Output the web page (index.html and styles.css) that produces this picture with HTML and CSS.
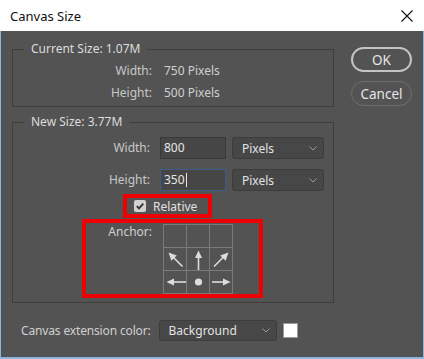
FILE: index.html
```html
<!DOCTYPE html>
<html>
<head>
<meta charset="utf-8">
<link rel="stylesheet" href="styles.css">
</head>
<body>
<div class="window">
  <div class="titlebar">
    <span class="title">Canvas Size</span>
    <svg class="close" width="12" height="12" viewBox="0 0 12 12"><path d="M0.5 0.5L11.5 11.5M11.5 0.5L0.5 11.5" stroke="#111" stroke-width="1.1" fill="none"/></svg>
  </div>
  <div class="body">
    <div class="main">
      <div class="groups">
        <fieldset class="group g1">
          <legend>Current Size: 1.07M</legend>
          <div class="info">
            <span class="lbl">Width:</span><span class="val">750 Pixels</span>
            <span class="lbl">Height:</span><span class="val">500 Pixels</span>
          </div>
        </fieldset>
        <fieldset class="group g2">
          <legend>New Size: 3.77M</legend>
          <div class="fields">
            <span class="lbl">Width:</span>
            <div class="input">800</div>
            <div class="select">Pixels<svg class="chev" width="8" height="5" viewBox="0 0 8 5"><path d="M0.5 0.5L4 4L7.5 0.5" stroke="#9a9a9a" fill="none"/></svg></div>
            <span class="lbl">Height:</span>
            <div class="input focus">350<span class="caret"></span></div>
            <div class="select">Pixels<svg class="chev" width="8" height="5" viewBox="0 0 8 5"><path d="M0.5 0.5L4 4L7.5 0.5" stroke="#9a9a9a" fill="none"/></svg></div>
          </div>
          <div class="relative mark">
            <span class="check"><svg width="12" height="12" viewBox="0 0 12 12"><path d="M2.8 6.2L5 8.4L9.3 3.6" stroke="#333" stroke-width="1.9" fill="none"/></svg></span>
            <span class="rel-text">Relative</span>
          </div>
          <div class="anchor mark">
            <span class="anchor-lbl">Anchor:</span>
            <div class="grid">
              <div class="cell"></div>
              <div class="cell"></div>
              <div class="cell"></div>
              <div class="cell"><svg viewBox="0 0 22 22" width="22" height="22"><path d="M9 9L18.5 18.5" class="ln"/><polygon points="4.5,4.5 12.8,7.4 7.4,12.8" class="hd"/></svg></div>
              <div class="cell"><svg viewBox="0 0 22 22" width="22" height="22"><path d="M11.5 9V22" class="ln"/><polygon points="11.5,2.5 15,10 8,10" class="hd"/></svg></div>
              <div class="cell"><svg viewBox="0 0 22 22" width="22" height="22"><path d="M13.5 9L4 18.5" class="ln"/><polygon points="18.5,4.5 15.6,12.8 10.2,7.4" class="hd"/></svg></div>
              <div class="cell"><svg viewBox="0 0 22 22" width="22" height="22"><path d="M9 11H22" class="ln"/><polygon points="2.5,11 10,7.5 10,14.5" class="hd"/></svg></div>
              <div class="cell"><svg viewBox="0 0 22 22" width="22" height="22"><circle cx="11.5" cy="11" r="3.6" class="hd"/></svg></div>
              <div class="cell"><svg viewBox="0 0 22 22" width="22" height="22"><path d="M2 11H14" class="ln"/><polygon points="20.5,11 13,7.5 13,14.5" class="hd"/></svg></div>
            </div>
          </div>
        </fieldset>
      </div>
      <div class="buttons">
        <button class="btn ok">OK</button>
        <button class="btn cancel">Cancel</button>
      </div>
    </div>
    <div class="ext">
      <span class="ext-lbl">Canvas extension color:</span>
      <div class="select wide">Background<svg class="chev" width="8" height="5" viewBox="0 0 8 5"><path d="M0.5 0.5L4 4L7.5 0.5" stroke="#9a9a9a" fill="none"/></svg></div>
      <span class="swatch"></span>
    </div>
  </div>
</div>
</body>
</html>
```
FILE: styles.css
```css
* { box-sizing: border-box; }
html, body { margin: 0; padding: 0; background: #535353; }
body { font-family: "Noto Sans", "Open Sans", sans-serif; font-size: 12px; color: #d6d6d6; }

.window {
  width: 424px;
  height: 359px;
  border: 1px solid #8cb6e0;
  border-top: none;
  border-bottom-width: 2px;
  background: #535353;
  display: flex;
  flex-direction: column;
}

.titlebar {
  height: 31px;
  background: #fff;
  margin: 0 -1px;
  display: flex;
  align-items: center;
  justify-content: space-between;
  padding: 0 11px 0 10px;
  flex: none;
}
.title { font-size: 13px; color: #111; }
.close { display: block; }

.body {
  flex: 1;
  padding: 9px 11px 0 11px;
  display: flex;
  flex-direction: column;
}

.main { display: flex; gap: 17px; }
.groups { width: 323px; display: flex; flex-direction: column; }

.group {
  margin: 0;
  padding: 0 0 3px 0;
  border: 1px solid #3e3e3e;
  min-width: 0;
}
.group legend {
  margin-left: 11px;
  padding: 0 7px;
  line-height: 18px;
  color: #dcdcdc;
}
.g2 { margin-top: 6px; padding-bottom: 4px; }

.info {
  display: grid;
  grid-template-columns: 139px auto;
  column-gap: 12px;
  grid-auto-rows: 22px;
  align-items: center;
  margin-top: 1px;
}
.lbl { text-align: right; color: #c8c8c8; }
.val { color: #d0d0d0; }

.fields {
  display: grid;
  grid-template-columns: 139px 68px 92px;
  column-gap: 6px;
  row-gap: 9px;
  margin-top: 5px;
  align-items: center;
}
.fields .lbl { margin-right: 2px; }
.input {
  height: 22px;
  background: #464646;
  border: 1px solid #3a3a3a;
  color: #e6e6e6;
  padding: 0 3px;
  line-height: 20px;
  margin-left: 2px;
  display: flex;
  align-items: center;
}
.input.focus { border-color: #3b5d88; }
.caret { display: inline-block; width: 1px; height: 14px; background: #e6e6e6; margin-left: 1px; }

.select {
  height: 22px;
  background: #474747;
  border: 1px solid #3c3c3c;
  border-radius: 3px;
  color: #e2e2e2;
  padding: 0 6px 0 9px;
  display: flex;
  align-items: center;
  justify-content: space-between;
}
.fields .select { margin-left: 0; margin-top: 1px; }
.chev { display: block; }

.mark { border: 4px solid #ee0000; }
.relative {
  margin: 3px 0 0 110px;
  width: 89px;
  height: 24px;
  display: flex;
  align-items: center;
  padding-left: 7px;
  gap: 7px;
}
.check {
  width: 12px;
  height: 12px;
  background: #d2d2d2;
  border-radius: 2px;
  display: block;
}
.check svg { display: block; }
.rel-text { color: #e0e0e0; }

.anchor {
  margin: 1px 0 0 69px;
  width: 181px;
  height: 79px;
  display: flex;
  padding-top: 1px;
}
.anchor-lbl { width: 66px; text-align: right; line-height: 16px; color: #d0d0d0; }
.grid {
  margin-left: 11px;
  display: grid;
  grid-template-columns: repeat(3, 23px);
  grid-template-rows: repeat(3, 23px);
  border-left: 1px solid #7a7a7a;
  border-top: 1px solid #7a7a7a;
  width: 70px;
  height: 70px;
}
.cell { border-right: 1px solid #7a7a7a; border-bottom: 1px solid #7a7a7a; }
.cell svg { display: block; }
.ln { stroke: #dcdcdc; stroke-width: 1.6; fill: none; }
.hd { fill: #dcdcdc; }

.buttons { display: flex; flex-direction: column; gap: 9px; padding-top: 7px; }
.btn {
  width: 61px;
  height: 25px;
  border-radius: 13px;
  background: #535353;
  color: #e6e6e6;
  font-family: inherit;
  font-size: 13.5px;
  padding: 0;
}
.ok { border: 2px solid #c4c4c4; }
.cancel { border: 1.5px solid #6e6e6e; }

.ext {
  display: flex;
  align-items: center;
  margin: 17px 0 0 9px;
}
.ext-lbl { flex: none; white-space: nowrap; color: #d0d0d0; letter-spacing: -0.15px; }
.select.wide { width: 118px; height: 21px; margin-left: 8px; }
.swatch { width: 15px; height: 15px; background: #fff; border: 1px solid #9a9a9a; margin-left: 6px; }
```
